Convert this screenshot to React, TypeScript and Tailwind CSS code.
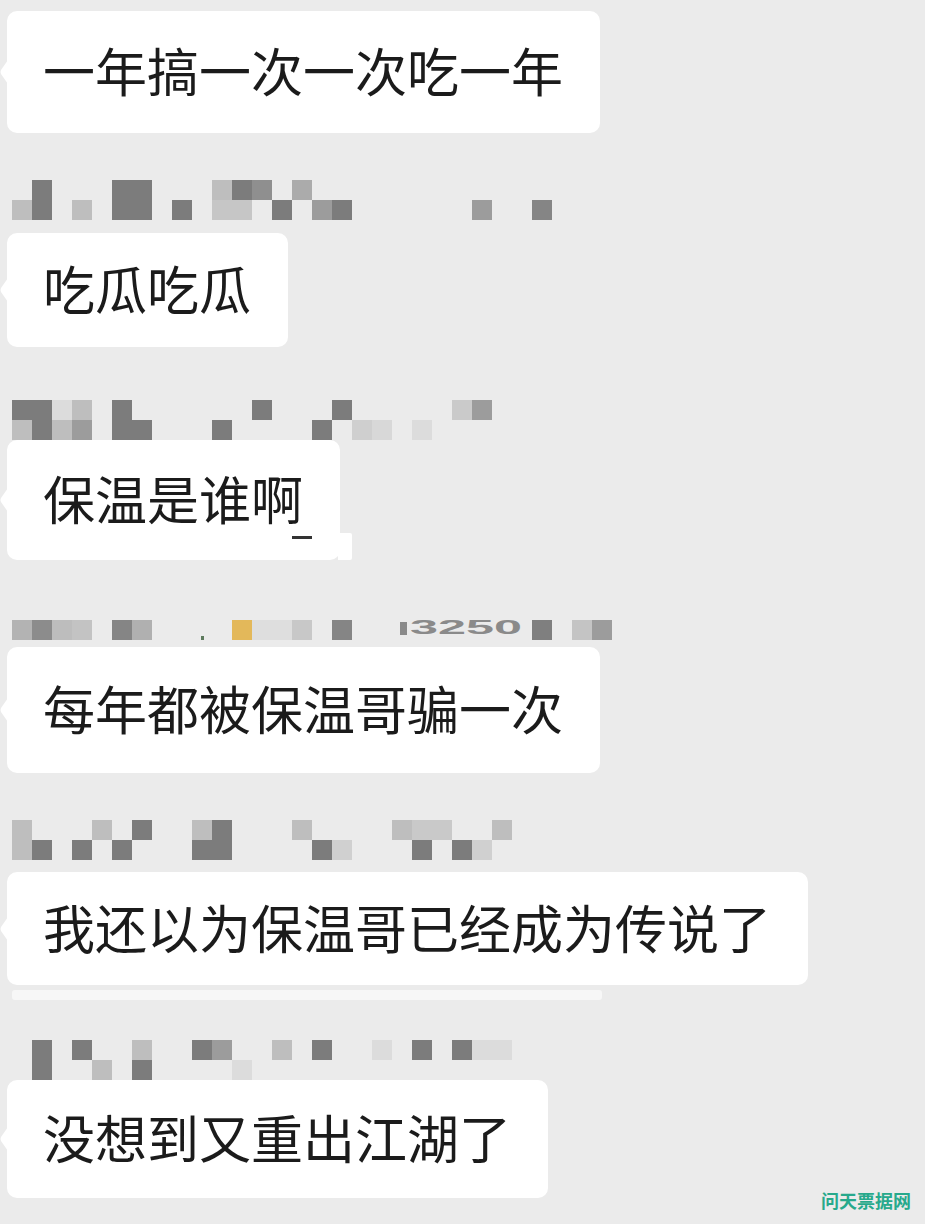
import clsx from "clsx";

type Cell = [number, number, string];

const D = "#7c7c7c";
const M = "#9c9c9c";
const L = "#bebebe";
const F = "#dcdcdc";

const nameRows: Cell[][] = [
  [
    [1, 0, D], [5, 0, D], [6, 0, D], [10, 0, L], [11, 0, D], [12, 0, "#8f8f8f"], [14, 0, "#ababab"],
    [0, 1, L], [1, 1, D], [3, 1, L], [5, 1, D], [6, 1, D], [8, 1, D], [10, 1, "#c6c6c6"], [11, 1, "#c6c6c6"],
    [13, 1, D], [15, 1, M], [16, 1, D], [23, 1, M], [26, 1, "#858585"],
  ],
  [
    [0, 0, D], [1, 0, D], [2, 0, F], [3, 0, L], [5, 0, D], [12, 0, D], [16, 0, D], [22, 0, "#cacaca"], [23, 0, M],
    [0, 1, L], [1, 1, D], [2, 1, L], [3, 1, M], [5, 1, D], [6, 1, D], [10, 1, D], [15, 1, D],
    [17, 1, "#cfcfcf"], [18, 1, "#d8d8d8"], [20, 1, F],
  ],
  [
    [0, 1, "#b3b3b3"], [1, 1, "#8c8c8c"], [2, 1, "#bdbdbd"], [3, 1, "#c3c3c3"], [5, 1, "#858585"], [6, 1, "#b0b0b0"],
    [11, 1, "#e3b85a"], [12, 1, "#dedede"], [13, 1, "#dedede"], [14, 1, "#c8c8c8"], [16, 1, "#858585"],
    [26, 1, "#7f7f7f"], [28, 1, "#c4c4c4"], [29, 1, M],
  ],
  [
    [0, 0, L], [4, 0, L], [6, 0, D], [9, 0, L], [10, 0, D], [14, 0, L], [19, 0, L], [20, 0, "#c9c9c9"], [21, 0, "#c9c9c9"], [24, 0, L],
    [0, 1, L], [1, 1, D], [3, 1, D], [5, 1, D], [9, 1, D], [10, 1, D], [15, 1, D], [16, 1, "#d0d0d0"],
    [20, 1, D], [22, 1, D], [23, 1, "#d0d0d0"],
  ],
  [
    [1, 0, D], [3, 0, D], [6, 0, L], [9, 0, D], [10, 0, M], [13, 0, L], [15, 0, D], [18, 0, F], [20, 0, D], [22, 0, D],
    [23, 0, F], [24, 0, F],
    [1, 1, D], [4, 1, L], [6, 1, D], [11, 1, F],
  ],
];

const messages = [
  { text: "一年搞一次一次吃一年", box: "mt-0 h-[122px]", nameMt: "mt-[47px]" },
  { text: "吃瓜吃瓜", box: "mt-[13px] h-[114px]", nameMt: "mt-[53px]" },
  { text: "保温是谁啊", box: "mt-0 h-[120px]", nameMt: "mt-[40px]", glitch: true },
  { text: "每年都被保温哥骗一次", box: "mt-[7px] h-[126px]", nameMt: "mt-[47px]" },
  { text: "我还以为保温哥已经成为传说了", box: "mt-[12px] h-[113px]", nameMt: "mt-[40px]", strip: true },
  { text: "没想到又重出江湖了", box: "mt-0 h-[118px]" },
];

function NameMosaic({ cells, className, extra }: { cells: Cell[]; className?: string; extra?: boolean }) {
  return (
    <svg width="640" height="40" className={clsx("block shrink-0", className)}>
      {cells.map(([c, r, color], i) => (
        <rect key={i} x={12 + c * 20} y={r * 20} width="20" height="20" fill={color} />
      ))}
      {extra && (
        <>
          <rect x="201" y="36" width="3" height="4" fill="#5d7a5d" />
          <rect x="400" y="22" width="7" height="13" fill="#8a8a8a" />
          <text
            x="410"
            y="34"
            fontSize="21"
            fill="#8a8a8a"
            fontFamily="Liberation Sans, sans-serif"
            fontWeight="bold"
            textLength="112"
            lengthAdjust="spacingAndGlyphs"
          >
            3250
          </text>
        </>
      )}
    </svg>
  );
}

function Bubble({ text, className, glitch }: { text: string; className: string; glitch?: boolean }) {
  return (
    <div
      className={clsx(
        "relative ml-[7px] flex items-center rounded-[10px] bg-white pl-[36px] pr-[37px] pb-[4px] text-[52px] leading-none text-[#1b1b1b]",
        className
      )}
    >
      <svg width="8" height="24" viewBox="0 0 8 24" className="absolute -left-[7px] top-1/2 -translate-y-1/2">
        <path d="M8 0 L1 10 Q0 12 1 14 L8 24 Z" fill="#ffffff" />
      </svg>
      {text}
      {glitch && (
        <>
          <div className="absolute -right-[12px] bottom-0 h-[27px] w-[14px] rounded-r-[2px] bg-white" />
          <div className="absolute bottom-[21px] right-[28px] h-[3px] w-[20px] bg-[#333]" />
        </>
      )}
    </div>
  );
}

export default function App() {
  return (
    <div className="relative h-[1224px] w-full overflow-hidden bg-[#ebebeb] font-['Noto_Sans_CJK_SC','Noto_Sans',sans-serif]">
      <div className="flex flex-col items-start pt-[11px]">
        {messages.map((m, i) => (
          <div key={i} className="flex flex-col items-start">
            <Bubble text={m.text} className={m.box} glitch={m.glitch} />
            {m.strip && <div className="ml-[12px] mt-[5px] h-[10px] w-[590px] rounded-[3px] bg-[#f7f7f7]" />}
            {i < nameRows.length && <NameMosaic cells={nameRows[i]} className={m.nameMt} extra={i === 2} />}
          </div>
        ))}
      </div>

      {/* watermark */}
      <div className="absolute bottom-[15px] right-[14px] text-[18px] font-semibold leading-none text-[#27a98c]">
        问天票据网
      </div>
    </div>
  );
}
